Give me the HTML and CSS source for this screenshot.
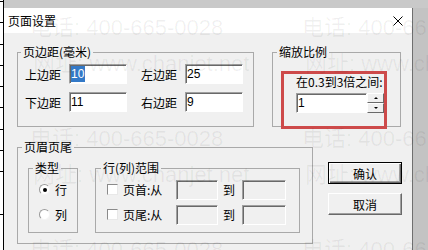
FILE: index.html
```html
<!DOCTYPE html>
<html lang="zh-CN">
<head>
    <meta charset="UTF-8">
    <title>页面设置</title>
    <link rel="stylesheet" href="styles.css">
</head>
<body>
    <div class="screen">
        <div class="grid-edge"></div>
        <div class="desk">
            <div class="top-band"></div>
            <div class="desk-row">
                <div class="dialog">
                    <div class="titlebar">
                        <span class="title">页面设置</span>
                        <svg class="close" width="10" height="10" viewBox="0 0 10 10">
                            <path d="M0.5 0.5 L9.5 9.5 M9.5 0.5 L0.5 9.5" stroke="#000" stroke-width="1" fill="none"/>
                        </svg>
                    </div>

                    <div class="dialog-body">
                        <div class="row">
                            <fieldset class="group margins">
                                <legend>页边距(毫米)</legend>
                                <div class="margin-grid">
                                    <span class="lbl">上边距</span>
                                    <span class="field"><span class="sel">10</span></span>
                                    <span class="lbl right">左边距</span>
                                    <span class="field">25</span>
                                    <span class="lbl">下边距</span>
                                    <span class="field">11</span>
                                    <span class="lbl right">右边距</span>
                                    <span class="field">9</span>
                                </div>
                            </fieldset>

                            <fieldset class="group scale">
                                <legend>缩放比例</legend>
                                <div class="scale-body">
                                    <div class="note">在0.3到3倍之间:</div>
                                    <div class="spin">
                                        <span class="field">1</span>
                                        <span class="spin-btns">
                                            <span class="spin-btn"><i class="up"></i></span>
                                            <span class="spin-btn"><i class="down"></i></span>
                                        </span>
                                    </div>
                                </div>
                            </fieldset>
                        </div>

                        <div class="row row-bottom">
                            <fieldset class="group header-footer">
                                <legend>页眉页尾</legend>
                                <div class="hf-body">
                                    <fieldset class="group kind">
                                        <legend>类型</legend>
                                        <div class="kind-body">
                                            <div class="opt"><span class="radio checked"></span>行</div>
                                            <div class="opt"><span class="radio"></span>列</div>
                                        </div>
                                    </fieldset>

                                    <fieldset class="group range">
                                        <legend>行(列)范围</legend>
                                        <div class="range-body">
                                            <div class="range-row">
                                                <span class="check"></span>
                                                <span class="range-lbl">页首:从</span>
                                                <span class="field off w42"></span>
                                                <span class="to">到</span>
                                                <span class="field off w44"></span>
                                            </div>
                                            <div class="range-row">
                                                <span class="check"></span>
                                                <span class="range-lbl">页尾:从</span>
                                                <span class="field off w42"></span>
                                                <span class="to">到</span>
                                                <span class="field off w44"></span>
                                            </div>
                                        </div>
                                    </fieldset>
                                </div>
                            </fieldset>

                            <div class="buttons">
                                <button class="btn default">确认</button>
                                <button class="btn">取消</button>
                            </div>
                        </div>

                        <!-- red annotation box -->
                        <div class="mark"></div>
                    </div>
                </div>
                <div class="desk-fill"></div>
            </div>
        </div>

        <div class="watermark">
            <div class="wm-row"><span>电话: 400-665-0028</span><span>电话: 400-665-0028</span></div>
            <div class="wm-row site"><span>网址: www.chanjet.net</span><span>网址: www.chanjet.net</span></div>
            <div class="wm-row gap"><span>电话: 400-665-0028</span><span>电话: 400-665-0028</span></div>
            <div class="wm-row site"><span>网址: www.chanjet.net</span><span>网址: www.chanjet.net</span></div>
            <div class="wm-row gap"><span>电话: 400-665-0028</span><span>电话: 400-665-0028</span></div>
        </div>
    </div>
</body>
</html>
```

FILE: styles.css
```css
* {
    box-sizing: border-box;
}

body {
    margin: 0;
    font-family: "Noto Sans CJK SC", "Liberation Sans", sans-serif;
    font-size: 12px;
    color: #000;
}

.screen {
    position: relative;
    display: flex;
    width: 428px;
    height: 250px;
    overflow: hidden;
    background: #c3c3c3;
}

.grid-edge {
    width: 4px;
    flex: none;
    border-right: 1px solid #000;
    background: repeating-linear-gradient(to bottom, #fff 0, #fff 20.25px, #000 20.25px, #000 21.25px);
    background-position: 0 -19px;
}

.desk {
    flex: 1;
    display: flex;
    flex-direction: column;
}

.top-band {
    height: 8px;
    background: #c9c9c9;
}

.desk-row {
    flex: 1;
    display: flex;
}

.dialog {
    width: 409px;
    background: #f0f0f0;
    border-right: 1px solid #6f6f6f;
}

.desk-fill {
    flex: 1;
    background: #c3c3c3;
}

.titlebar {
    height: 25px;
    background: #fff;
    display: flex;
    align-items: center;
    padding: 1px 9px 0 4px;
}

.title {
    line-height: 14px;
}

.close {
    margin-left: auto;
}

.dialog-body {
    position: relative;
    padding: 12px 0 0 13px;
}

.row {
    display: flex;
    gap: 18px;
}

.row-bottom {
    margin-top: 13px;
    gap: 15px;
}

.group {
    margin: 0;
    padding: 0;
    min-width: 0;
    border: 1px solid #a9a9a9;
}

.group legend {
    padding: 0 2px;
    line-height: 14px;
    font-size: 12px;
}

/* 页边距 */
.margins {
    width: 237px;
}

.margins legend {
    margin-left: 3px;
}

.margin-grid {
    display: grid;
    grid-template-columns: 44px 58px 58px 58px;
    grid-auto-rows: 20px;
    row-gap: 8px;
    padding: 5px 0 14px 7px;
    align-items: center;
}

.lbl.right {
    text-align: right;
    padding-right: 8px;
}

.field {
    display: flex;
    align-items: center;
    height: 20px;
    padding-left: 1px;
    background: #fff;
    border: 1px solid;
    border-color: #a0a0a0 #fff #fff #a0a0a0;
    box-shadow: inset 1px 1px 0 #696969;
    font-family: "Liberation Sans", sans-serif;
    font-size: 12px;
}

.sel {
    background: #3379c7;
    color: #fff;
    line-height: 16px;
    padding: 0 1px 0 0;
}

/* 缩放比例 */
.scale {
    width: 129px;
}

.scale legend {
    margin-left: 4px;
}

.scale-body {
    padding: 16px 0 12px 23px;
}

.note {
    line-height: 14px;
    margin-bottom: 4px;
    white-space: nowrap;
}

.spin {
    display: flex;
}

.spin .field {
    width: 71px;
}

.spin-btns {
    display: flex;
    flex-direction: column;
    width: 17px;
    height: 20px;
}

.spin-btn {
    flex: 1;
    display: flex;
    align-items: center;
    justify-content: center;
    background: #f0f0f0;
    border: 1px solid;
    border-color: #fff #696969 #696969 #fff;
}

.spin-btn i {
    width: 0;
    height: 0;
    border-left: 2px solid transparent;
    border-right: 2px solid transparent;
}

.spin-btn .up {
    border-bottom: 2px solid #000;
}

.spin-btn .down {
    border-top: 2px solid #000;
}

/* 页眉页尾 */
.header-footer {
    width: 296px;
}

.header-footer legend {
    margin-left: 4px;
}

.hf-body {
    display: flex;
    gap: 17px;
    padding: 7px 0 10px 10px;
}

.kind {
    width: 50px;
}

.kind legend {
    margin-left: 4px;
}

.kind-body {
    padding: 2px 0 5px 10px;
}

.opt {
    display: flex;
    align-items: center;
    gap: 5px;
    height: 25px;
}

.radio {
    position: relative;
    width: 11px;
    height: 11px;
    border-radius: 50%;
    background: #fff;
    border: 1px solid;
    border-color: #9a9a9a #f4f4f4 #f4f4f4 #9a9a9a;
}

.radio.checked::after {
    content: "";
    position: absolute;
    left: 2.5px;
    top: 2.5px;
    width: 4px;
    height: 4px;
    border-radius: 50%;
    background: #000;
}

.range {
    width: 205px;
}

.range legend {
    margin-left: 5px;
}

.range-body {
    padding: 2px 0 5px 11px;
}

.range-row {
    display: flex;
    align-items: center;
    height: 25px;
}

.check {
    width: 11px;
    height: 11px;
    background: #fff;
    border: 1px solid;
    border-color: #8a8a8a #e8e8e8 #e8e8e8 #8a8a8a;
    margin-right: 5px;
}

.range-lbl {
    width: 53px;
}

.to {
    margin: 0 7px 0 5px;
}

.field.off {
    background: #f0f0f0;
}

.w42 {
    width: 42px;
}

.w44 {
    width: 44px;
}

/* 按钮 */
.buttons {
    display: flex;
    flex-direction: column;
    gap: 9px;
    padding-top: 22px;
}

.btn {
    width: 74px;
    height: 22px;
    padding: 0;
    font-family: "Noto Sans CJK SC", sans-serif;
    font-size: 12px;
    color: #000;
    background: #f0f0f0;
    border: 1px solid;
    border-color: #fff #696969 #696969 #fff;
    box-shadow: inset -1px -1px 0 #a0a0a0;
}

.btn.default {
    border: 1px solid #000;
    box-shadow: inset 1px 1px 0 #fff, inset -1px -1px 0 #696969, inset -2px -2px 0 #a0a0a0;
}

.mark {
    position: absolute;
    left: 277px;
    top: 38px;
    width: 106px;
    height: 58px;
    border: 3px solid #cd4a4a;
}

/* 水印 */
.watermark {
    position: absolute;
    inset: 0;
    pointer-events: none;
    padding-top: 16px;
    color: rgba(0, 0, 0, 0.06);
    font-family: "Liberation Sans", "Noto Sans CJK SC", sans-serif;
    font-size: 22px;
    line-height: 24px;
}

.wm-row {
    display: flex;
    padding-left: 30px;
    white-space: nowrap;
}

.wm-row span {
    width: 272px;
    flex: none;
}

.wm-row.site {
    margin-top: 12px;
    padding-left: 33px;
}

.wm-row.gap {
    margin-top: 51px;
}
```
